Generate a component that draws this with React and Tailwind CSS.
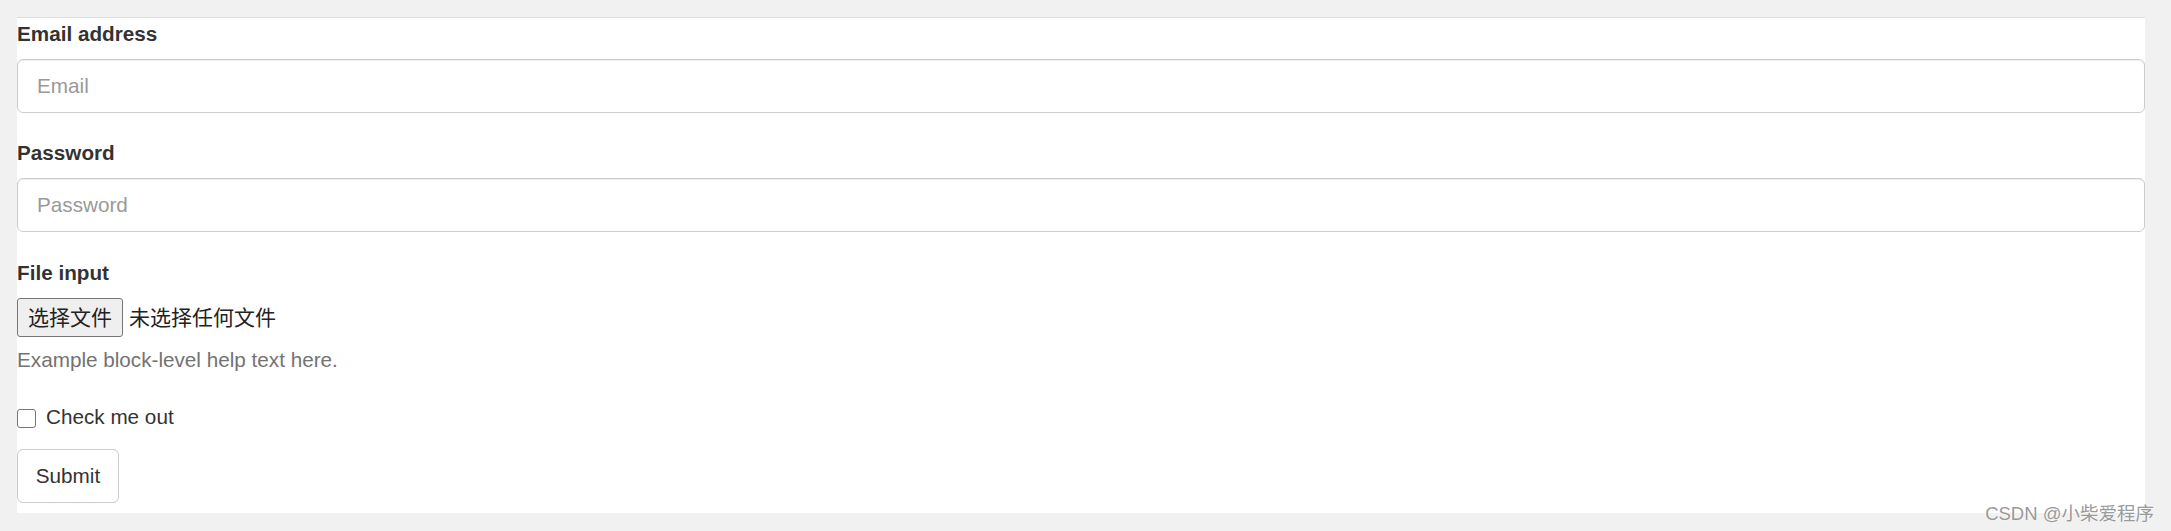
export default function App() {
  const font = { fontFamily: '"Liberation Sans", Arial, "Noto Sans CJK SC", sans-serif' };

  return (
    <div
      className="relative min-h-[531px] w-full bg-[#f1f1f1] pt-[17px] pl-[17px] pr-[26px]"
      style={font}
    >
      {/* Form panel */}
      <form className="border-t border-[#dedede] bg-white pb-[10px] pt-[2px] text-[20.7px] text-[#333]">
        <div className="mb-[26px]">
          <label className="mb-[11px] block h-[28px] font-bold leading-[28px]">Email address</label>
          <input
            type="email"
            placeholder="Email"
            className="block h-[54px] w-full rounded-[6px] border border-[#cccccc] bg-white px-[19px] text-[20.7px] text-[#555] shadow-[inset_0_1px_1px_rgba(0,0,0,0.075)] outline-none placeholder:text-[#999]"
          />
        </div>

        <div className="mb-[27px]">
          <label className="mb-[11px] block h-[28px] font-bold leading-[28px]">Password</label>
          <input
            type="password"
            placeholder="Password"
            className="block h-[54px] w-full rounded-[6px] border border-[#cccccc] bg-white px-[19px] text-[20.7px] text-[#555] shadow-[inset_0_1px_1px_rgba(0,0,0,0.075)] outline-none placeholder:text-[#999]"
          />
        </div>

        <div>
          <label className="mb-[11px] block h-[28px] font-bold leading-[28px]">File input</label>
          <div className="flex h-[39px] items-center gap-[6px] text-[21px] text-[#222]">
            <button
              type="button"
              className="flex h-[39px] items-center rounded-[3px] border border-[#767676] bg-[#efefef] px-[10px] leading-none"
            >
              选择文件
            </button>
            <span className="leading-none">未选择任何文件</span>
          </div>
          <p className="mt-[9px] h-[28px] leading-[28px] text-[#737373]">Example block-level help text here.</p>
        </div>

        <label className="mt-[29px] flex h-[28px] items-center gap-[10px] leading-[28px]">
          <span className="mt-[3px] block h-[19px] w-[19px] rounded-[3px] border border-[#767676] bg-white" />
          <span>Check me out</span>
        </label>

        <button
          type="submit"
          className="mt-[18px] block h-[54px] w-[102px] rounded-[6px] border border-[#cccccc] bg-white text-center text-[20.7px] text-[#333]"
        >
          Submit
        </button>
      </form>

      <div className="absolute right-[17px] top-[504px] text-[18.5px] leading-[20px] text-[#9a9a9a] [text-shadow:0_0_2px_#fff]">
        CSDN @小柴爱程序
      </div>
    </div>
  );
}
